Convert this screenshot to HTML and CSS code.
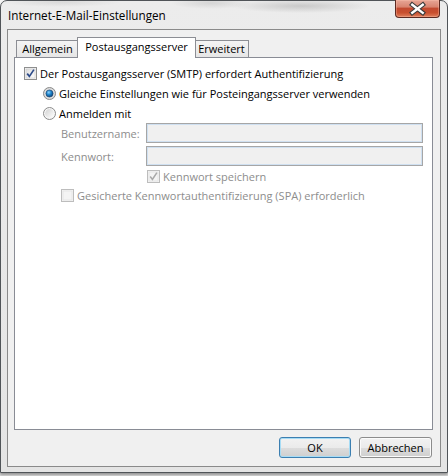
FILE: index.html
```html
<!DOCTYPE html>
<html lang="de">
<head>
<meta charset="utf-8">
<title>Internet-E-Mail-Einstellungen</title>
<link rel="stylesheet" href="styles.css">
</head>
<body>
<div class="window">
  <div class="titlebar">
    <span class="title">Internet-E-Mail-Einstellungen</span>
    <div class="close">
      <svg width="45" height="18" viewBox="0 0 45 18">
        <path d="M17 4.5 L28 13 M28 4.5 L17 13" stroke="#3b3b3b" stroke-width="4.8" stroke-linecap="square" fill="none"/>
        <path d="M17 4.5 L28 13 M28 4.5 L17 13" stroke="#ffffff" stroke-width="2.5" stroke-linecap="square" fill="none"/>
      </svg>
    </div>
  </div>
  <div class="client">
    <div class="tabs">
      <div class="tab t1">Allgemein</div>
      <div class="tab active">Postausgangsserver</div>
      <div class="tab t3">Erweitert</div>
    </div>
    <div class="panel">
      <div class="row r-main">
        <svg class="cb" width="13" height="13" viewBox="0 0 13 13">
          <defs><linearGradient id="cbg" x1="0" y1="0" x2="1" y2="1"><stop offset="0" stop-color="#dcdcdc"/><stop offset="1" stop-color="#ffffff"/></linearGradient></defs>
          <rect x="0.5" y="0.5" width="12" height="12" fill="#f4f4f4" stroke="#8e8f8f"/>
          <rect x="2" y="2" width="9" height="9" fill="url(#cbg)" stroke="#c8c8c8" stroke-width="0.6"/>
          <path d="M3.2 6.6 L5.4 9.4 L9.9 2.6" stroke="#2c4b8a" stroke-width="1.7" fill="none"/>
        </svg>
        <span>Der Postausgangsserver (SMTP) erfordert Authentifizierung</span>
      </div>
      <div class="row r-radio">
        <svg class="rb" width="13" height="13" viewBox="0 0 13 13">
          <defs>
            <radialGradient id="rbo" cx="0.5" cy="0.5" r="0.5"><stop offset="0" stop-color="#ffffff"/><stop offset="1" stop-color="#d4d4d4"/></radialGradient>
            <radialGradient id="dot" cx="0.4" cy="0.35" r="0.7"><stop offset="0" stop-color="#8fd3ff"/><stop offset="0.45" stop-color="#1f86cc"/><stop offset="1" stop-color="#0b3f74"/></radialGradient>
          </defs>
          <circle cx="6.5" cy="6.5" r="6" fill="url(#rbo)" stroke="#8a8a8a"/>
          <circle cx="6.5" cy="6.5" r="3.6" fill="url(#dot)" stroke="#1c3f6a" stroke-width="0.6"/>
        </svg>
        <span>Gleiche Einstellungen wie für Posteingangsserver verwenden</span>
      </div>
      <div class="row r-radio">
        <svg class="rb" width="13" height="13" viewBox="0 0 13 13">
          <defs><linearGradient id="rboff" x1="0" y1="0" x2="1" y2="1"><stop offset="0" stop-color="#d2d2d2"/><stop offset="1" stop-color="#ffffff"/></linearGradient></defs>
          <circle cx="6.5" cy="6.5" r="6" fill="#f6f6f6" stroke="#8a8a8a"/>
          <circle cx="6.5" cy="6.5" r="4.4" fill="url(#rboff)"/>
        </svg>
        <span>Anmelden mit</span>
      </div>
      <div class="field f1">
        <span class="label">Benutzername:</span>
        <div class="input"></div>
      </div>
      <div class="field f2">
        <span class="label">Kennwort:</span>
        <div class="input"></div>
      </div>
      <div class="row r-save">
        <svg class="cb" width="13" height="13" viewBox="0 0 13 13">
          <rect x="0.5" y="0.5" width="12" height="12" fill="#f4f4f4" stroke="#bdbdbd"/>
          <rect x="2" y="2" width="9" height="9" fill="#f4f4f4" stroke="#dedede" stroke-width="0.6"/>
          <path d="M3.2 6.6 L5.4 9.4 L9.9 2.6" stroke="#a9a9a9" stroke-width="1.6" fill="none"/>
        </svg>
        <span class="dis">Kennwort speichern</span>
      </div>
      <div class="row r-spa">
        <svg class="cb" width="13" height="13" viewBox="0 0 13 13">
          <rect x="0.5" y="0.5" width="12" height="12" fill="#f4f4f4" stroke="#bdbdbd"/>
          <rect x="2" y="2" width="9" height="9" fill="#f4f4f4" stroke="#dedede" stroke-width="0.6"/>
        </svg>
        <span class="dis">Gesicherte Kennwortauthentifizierung (SPA) erforderlich</span>
      </div>
    </div>
    <div class="buttons">
      <button class="btn default">OK</button>
      <button class="btn cancel">Abbrechen</button>
    </div>
  </div>
</div>
</body>
</html>
```
FILE: styles.css
```css
html, body {
  margin: 0;
  padding: 0;
}
body {
  width: 448px;
  height: 476px;
  background: linear-gradient(to bottom, #f6f6f6, #e2e2e2);
  font-family: "Open Sans", "Noto Sans", sans-serif;
  font-size: 11px;
  color: #1a1a1a;
  overflow: hidden;
}
.window {
  box-sizing: border-box;
  width: 448px;
  height: 473px;
  border: 1px solid #505458;
  border-radius: 7px 7px 0 0;
  background:
    radial-gradient(ellipse 70px 7px at 300px 5px, rgba(110,110,110,0.28), rgba(110,110,110,0) 100%),
    radial-gradient(ellipse 40px 6px at 210px 2px, rgba(110,110,110,0.18), rgba(110,110,110,0) 100%),
    radial-gradient(ellipse 60px 5px at 60px 1px, rgba(110,110,110,0.15), rgba(110,110,110,0) 100%),
    linear-gradient(to bottom, #ececec, #e4e4e4);
  box-shadow: 0 2px 3px rgba(0,0,0,0.35);
  display: flex;
  flex-direction: column;
}
.titlebar {
  height: 28px;
  display: flex;
  justify-content: space-between;
  align-items: flex-start;
  padding-left: 7px;
  padding-right: 7px;
}
.title {
  font-size: 11.7px;
  line-height: 28px;
  color: #000;
}
.close {
  box-sizing: border-box;
  width: 45px;
  height: 18px;
  margin-top: -1px;
  border: 1px solid #5c2a22;
  border-top: none;
  border-radius: 0 0 4px 4px;
  background: linear-gradient(to bottom, #e7a696 0%, #d98571 40%, #c24a30 50%, #c9502f 75%, #e0805d 100%);
  box-shadow: inset 0 0 0 1px rgba(255,200,180,0.35);
  display: flex;
}
.client {
  box-sizing: border-box;
  height: 438px;
  margin: 0 6px;
  border: 1px solid #8a8a8a;
  background: #f0f0f0;
  padding: 7px 7px 0 6px;
  display: flex;
  flex-direction: column;
}
.tabs {
  height: 20px;
  display: flex;
  align-items: flex-end;
  padding-left: 2px;
}
.tab {
  box-sizing: border-box;
  height: 17px;
  border: 1px solid #8c8e94;
  border-bottom: none;
  background: linear-gradient(to bottom, #f4f4f4, #e6e6e6);
  text-align: center;
  line-height: 16px;
  color: #000;
}
.t1 { width: 63px; }
.t3 { width: 55px; }
.tab.active {
  position: relative;
  z-index: 1;
  width: 119px;
  height: 21px;
  margin: 0 -2px -1px -2px;
  background: #ffffff;
  line-height: 17px;
}
.panel {
  box-sizing: border-box;
  height: 373px;
  border: 1px solid #898c95;
  background: #ffffff;
  padding: 5px 9px 0 9px;
  display: flex;
  flex-direction: column;
}
.row {
  display: flex;
  align-items: center;
  height: 20px;
  color: #000;
}
.cb { margin-right: 3px; flex: none; }
.rb { margin-right: 3px; flex: none; }
.r-radio { padding-left: 19px; }
.field {
  display: flex;
  align-items: center;
  height: 20px;
  padding-left: 37px;
}
.f2 { margin-top: 3px; }
.label {
  width: 85px;
  color: #8d8d8d;
}
.input {
  box-sizing: border-box;
  width: 277px;
  height: 20px;
  border: 1px solid #a6a6a6;
  box-shadow: inset 0 0 0 1px #cfe0f1;
  background: #f0f0f0;
}
.r-save {
  padding-left: 123px;
  height: 18px;
  margin-top: 1px;
}
.r-spa {
  padding-left: 37px;
}
.dis { color: #8d8d8d; }
.buttons {
  display: flex;
  justify-content: flex-end;
  gap: 8px;
  margin-top: 7px;
  padding-right: 1px;
}
.btn {
  box-sizing: border-box;
  height: 21px;
  border-radius: 3px;
  font-family: "Open Sans", "Noto Sans", sans-serif;
  font-size: 11px;
  color: #000;
  padding: 0;
  background: linear-gradient(to bottom, #f2f2f2 0%, #ebebeb 50%, #dddddd 51%, #cfcfcf 100%);
}
.default {
  width: 72px;
  border: 1px solid #3c7fb1;
  box-shadow: inset 0 0 0 1px #a7dcf5;
}
.cancel {
  width: 73px;
  border: 1px solid #8c8c8c;
  box-shadow: inset 0 0 0 1px #fbfbfb;
}
```
